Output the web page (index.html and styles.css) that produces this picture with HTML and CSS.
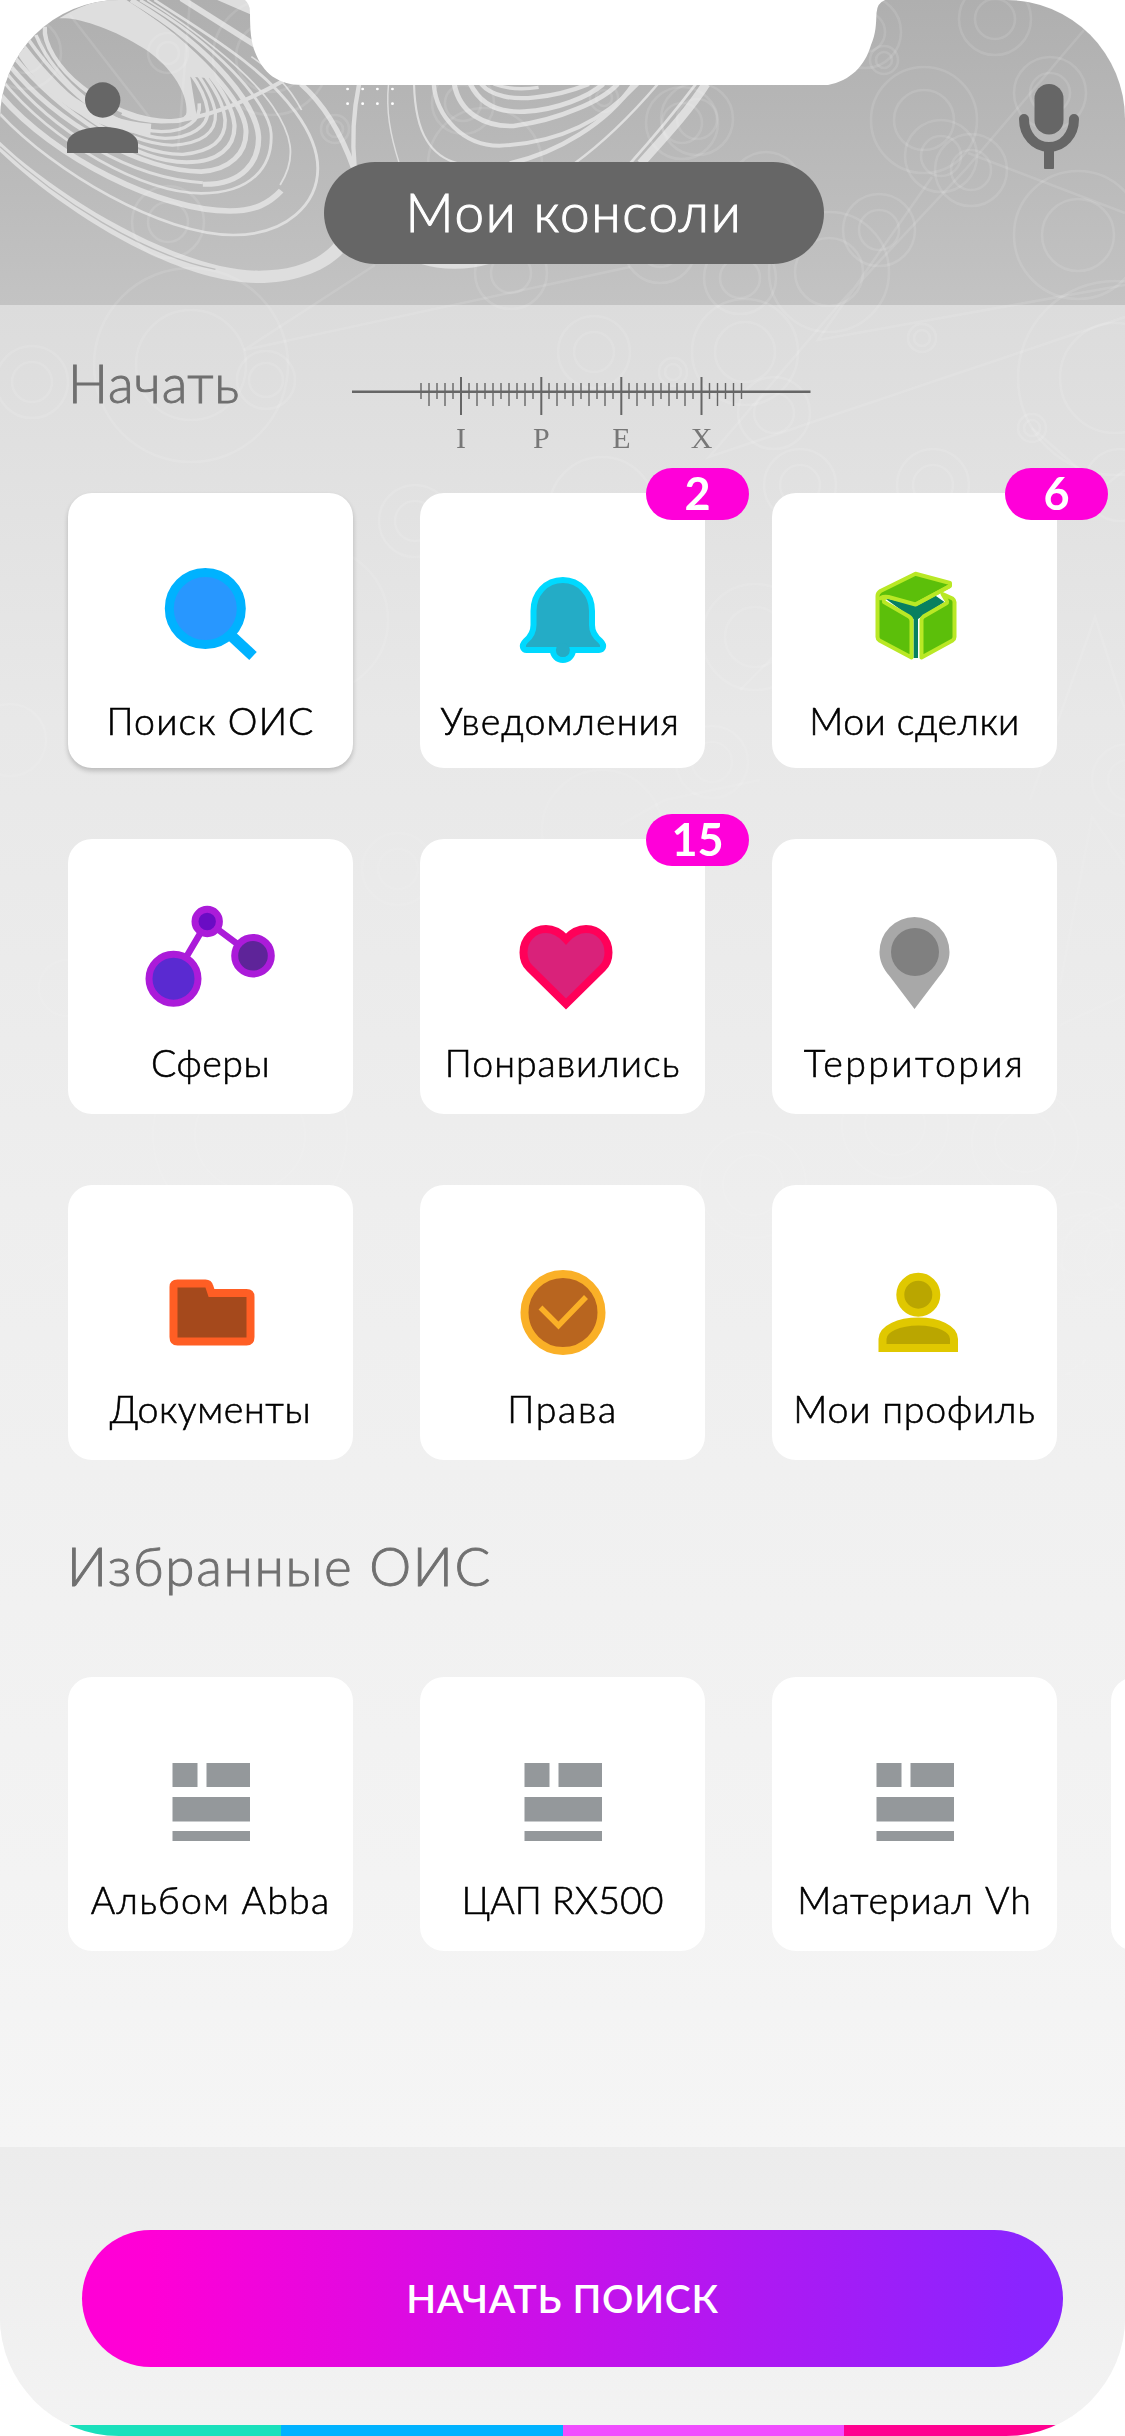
FILE: index.html
```html
<!DOCTYPE html>
<html lang="ru">
<head>
<meta charset="utf-8">
<title>Мои консоли</title>
<link rel="stylesheet" href="styles.css">
</head>
<body>
<div class="phone">
  <svg class="backdrop" viewBox="0 0 1125 2436" aria-hidden="true">
    <defs>
      <g id="ring-s"><circle r="14"/><circle r="8"/></g>
      <g id="ring-m"><circle r="36"/><circle r="20"/></g>
      <g id="ring-l"><circle r="53"/><circle r="30"/></g>
      <g id="ring-xl"><circle r="97"/><circle r="55"/></g>
      <linearGradient id="fade" x1="0" y1="0" x2="0" y2="1"><stop offset="0" stop-color="#fff"/><stop offset=".2" stop-color="#fff"/><stop offset=".45" stop-color="#888"/><stop offset="1" stop-color="#777"/></linearGradient>
      <mask id="fademask" maskUnits="userSpaceOnUse" x="0" y="0" width="1125" height="2436"><rect width="1125" height="2436" fill="url(#fade)"/></mask>
    </defs>
    <g class="waves" transform="scale(.35907 .33333)">
      <path class="solid" d="M0 425C160 590 500 812 720 812C820 812 890 780 930 730L955 760C900 820 810 849 720 849C480 849 160 620 0 455Z"/>
      <path class="gap" d="M0 440C160 600 400 765 600 808" stroke-width="4"/>
      <path d="M0 342C150 515 450 705 650 705C800 705 885 610 885 505C885 390 780 270 700 200C610 120 500 50 430 0" stroke-width="8"/>
      <path d="M0 285C150 475 450 633 640 633C710 633 750 610 783 572" stroke-width="17"/>
      <path d="M780 555C830 470 810 400 760 320C690 210 530 80 410 0" stroke-width="5"/>
      <path d="M5 240C150 430 400 580 560 580C700 580 760 500 755 400C750 310 600 130 390 0" stroke-width="8"/>
      <path d="M565 553C680 555 722 480 720 410C715 320 600 150 365 0" stroke-width="15"/>
      <path d="M15 215C150 395 360 535 565 548" stroke-width="9"/>
      <path d="M22 190C160 375 400 515 560 515C640 510 688 460 685 390C680 310 560 150 340 0" stroke-width="14"/>
      <path d="M35 165C170 345 380 487 520 487C610 487 655 440 653 375C645 290 540 130 330 0" stroke-width="12"/>
      <path d="M50 150C170 320 360 465 510 463C590 455 628 420 627 360C620 280 540 150 350 20" stroke-width="10"/>
      <path d="M65 135C190 310 340 430 480 436C560 430 603 400 600 340C590 270 530 170 400 60" stroke-width="9"/>
      <path d="M80 120C190 290 340 410 460 415C530 415 582 380 578 330C570 270 520 180 400 80" stroke-width="10"/>
      <path d="M100 105C150 240 310 390 450 395C520 395 560 360 555 310" stroke-width="10"/>
      <path d="M60 150C130 270 250 375 420 388" stroke-width="34"/>
      <path d="M125 80C115 185 290 362 480 364C525 364 535 340 525 300" stroke-width="12"/>
      <path class="solid" d="M165 55Q240 5 305 0L345 0C450 65 560 150 585 235L530 230L548 350L518 350C530 290 480 200 400 145C320 90 230 58 183 55Z"/>
      <path d="M340 340C450 395 600 355 788 243" stroke-width="12"/>
      <path d="M505 -5L710 135" stroke-width="17"/>
      <path class="solid" d="M605 0H690L700 44Z"/>
      <path d="M700 170C760 215 800 250 840 330" stroke-width="5"/>
      <path d="M838 252C900 310 950 400 985 505" stroke-width="15"/>
      <path d="M1000 252C985 330 980 420 988 505" stroke-width="12"/>
      <path d="M1082 252C1075 330 1085 400 1112 490" stroke-width="4"/>
      <path d="M1153 252C1155 330 1165 380 1188 420C1210 460 1240 480 1275 490" stroke-width="6"/>
      <path d="M1208 252C1215 350 1290 437 1390 437C1570 430 1690 350 1775 252" stroke-width="12"/>
      <path d="M1265 252C1280 340 1350 380 1430 378C1560 360 1680 300 1720 252" stroke-width="14"/>
      <path d="M1310 252C1340 320 1400 338 1460 335C1550 330 1640 290 1680 252" stroke-width="14"/>
      <path d="M1340 252C1370 290 1430 300 1490 292C1560 285 1610 265 1640 252" stroke-width="13"/>
      <path d="M1375 252Q1430 274 1500 262" stroke-width="10"/>
      <path d="M1420 490C1550 460 1690 370 1765 252" stroke-width="13"/>
      <path d="M1600 490C1690 420 1770 330 1832 252" stroke-width="7"/>
      <path d="M1755 490C1830 400 1890 320 1938 252" stroke-width="8"/>
      <path d="M1785 490C1860 400 1920 330 1966 252" stroke-width="25"/>
      <path class="solid" d="M1165 790Q1265 823 1370 790Z"/>
      <g class="dots"><circle cx="968" cy="267" r="4"/><circle cx="1010" cy="267" r="4"/><circle cx="1051" cy="267" r="4"/><circle cx="1093" cy="267" r="4"/><circle cx="968" cy="311" r="4"/><circle cx="1010" cy="311" r="4"/><circle cx="1051" cy="311" r="4"/><circle cx="1093" cy="311" r="4"/></g>
    </g>
    <g class="orbits" mask="url(#fademask)">
      <circle cx="168" cy="53" r="20"/><circle cx="168" cy="53" r="11"/><use href="#ring-m" x="168" y="222"/><use href="#ring-m" x="25" y="53"/>
      <use href="#ring-xl" x="191" y="365"/><use href="#ring-m" x="32" y="382"/><circle cx="266" cy="380" r="29"/><circle cx="266" cy="380" r="17"/>
      <use href="#ring-s" x="335" y="129"/><use href="#ring-m" x="511" y="273"/><circle cx="463" cy="103" r="31"/><circle cx="463" cy="103" r="18"/><circle cx="485" cy="165" r="57"/><circle cx="271" cy="57" r="58"/><circle cx="271" cy="57" r="35"/>
      <use href="#ring-m" x="995" y="19"/><use href="#ring-m" x="1050" y="93"/><use href="#ring-l" x="924" y="120"/><use href="#ring-m" x="941" y="156"/><use href="#ring-m" x="971" y="170"/>
      <circle cx="1078" cy="235" r="64"/><circle cx="1078" cy="235" r="36"/><use href="#ring-m" x="879" y="230"/><circle cx="829" cy="272" r="60"/><circle cx="829" cy="272" r="34"/><use href="#ring-m" x="740" y="278"/><use href="#ring-m" x="660" y="247"/><use href="#ring-m" x="766" y="188"/>
      <use href="#ring-l" x="745" y="352"/><use href="#ring-m" x="594" y="352"/><use href="#ring-s" x="673" y="372"/><use href="#ring-m" x="774" y="413"/><use href="#ring-s" x="922" y="338"/><use href="#ring-s" x="1032" y="428"/>
      <use href="#ring-m" x="682" y="123"/><use href="#ring-m" x="697" y="119"/><use href="#ring-m" x="865" y="32"/><use href="#ring-s" x="884" y="60"/><use href="#ring-s" x="604" y="98"/><use href="#ring-xl" x="1115" y="378"/>
      <use href="#ring-m" x="800" y="485"/><use href="#ring-m" x="933" y="485"/><circle cx="602" cy="510" r="53"/><circle cx="1120" cy="485" r="36"/>
      <use href="#ring-m" x="415" y="521"/><circle cx="315" cy="620" r="73"/><use href="#ring-l" x="755" y="637"/><use href="#ring-m" x="712" y="762"/><use href="#ring-m" x="1128" y="780"/>
      <use href="#ring-m" x="398" y="869"/><use href="#ring-xl" x="250" y="1135"/><circle cx="67" cy="988" r="28"/><circle cx="10" cy="740" r="36"/><circle cx="602" cy="830" r="60"/>
      <use href="#ring-l" x="465" y="1462"/><circle cx="710" cy="1488" r="30"/><circle cx="710" cy="1488" r="17"/><use href="#ring-l" x="753" y="1185"/><use href="#ring-l" x="895" y="1125"/><use href="#ring-l" x="1025" y="1142"/><use href="#ring-l" x="1082" y="1245"/><use href="#ring-l" x="1115" y="1260"/><use href="#ring-s" x="1070" y="1360"/><use href="#ring-m" x="438" y="1647"/>
      <path d="M375 265L244 350L630 267M70 15L150 118M190 0L178 150M1084 30L965 170L843 300L709 457L1125 317M932 177L818 340L1125 285M968 153L1125 213M1030 800L1095 617L1125 710M1060 985L1092 817L1125 865M1060 1025L1125 995M1060 520L1125 470M1032 428L1080 470M40 1270L70 1255M355 1385L366 1405L340 1400M740 690L790 640M1060 1380L1125 1330M1060 1240L1125 1200M620 825L665 800L760 780"/>
    </g>
  </svg>

  <header class="header">
    <svg class="header-icon" width="72" height="86" viewBox="67 83 72 86" role="img" aria-label="Профиль"><circle cx="102.700" cy="99" r="17.700"/><path d="M67 152V143C67 133 82 126 102.500 126C123 126 138 133 138 143V152Z"/></svg>
    <h1 class="title-pill">Мои консоли</h1>
    <svg class="header-icon" width="60" height="86" viewBox="1019 84 60 86" role="img" aria-label="Микрофон"><rect x="1034.500" y="84" width="29" height="50.500" rx="14.500"/><path class="mic-arc" d="M1024 119C1024 135 1035 147 1049 147C1063 147 1074 135 1074 119"/><rect x="1044" y="149" width="10" height="20" rx="1"/></svg>
  </header>
  <svg class="notch" width="640" height="86" viewBox="245 0 640 86" aria-hidden="true"><path d="M245 0Q250 4 250 13C250 30 251 42 255 52C263 73 278 85 302 85H828C850 81 865 66 871 45C876 33 876 25 876.500 13Q877 3 885 0Z"/></svg>

  <main class="content">
    <div class="section-head">
      <h2 class="section-title">Начать</h2>
      <div class="logo">
        <svg width="459" height="40" viewBox="352 376 459 40" aria-hidden="true">
          <path class="ruler-line" d="M352 391.700H810.500"/>
          <path class="ruler-tick" d="M421 383v16m8 -16v23m8 -23v16m8 -16v23m8 -23v16M469 383v16m8 -16v23m8 -23v16m8 -16v23m8 -23v16m8 -16v23m8 -23v16m8 -16v23m8 -23v16M549 383v16m8 -16v23m8 -23v16m8 -16v23m8 -23v16m8 -16v23m8 -23v16m8 -16v23m8 -23v16M629 383v16m8 -16v23m8 -23v16m8 -16v23m8 -23v16m8 -16v23m8 -23v16m8 -16v23m8 -23v16M709.500 383v16m8 -16v23m8 -23v16m8 -16v23m8 -23v16"/>
          <path class="ruler-major" d="M461 377v38M541.300 377v38M621.300 377v38M701.500 377v38"/>
        </svg>
        <div class="logo-letters"><span>I</span><span>P</span><span>E</span><span>X</span></div>
      </div>
    </div>

    <div class="grid">
      <a class="tile tile-active">
        <svg viewBox="130.500 563 160 110"><ellipse cx="204.800" cy="608.500" rx="36" ry="36" fill="#2897ff" stroke="#00b2ff" stroke-width="9"/><path d="M231 636L252.500 656" stroke="#00b2ff" stroke-width="11"/></svg>
        <span class="label l-search">Поиск ОИС</span>
      </a>
      <a class="tile">
        <svg viewBox="482.500 563 160 110" fill="#24acc6" stroke="#00d9ff" stroke-width="6"><circle cx="562.400" cy="650" r="10"/><path d="M562.400 580C545 580 533 594 533 611V625C533 632 530 637 525 641C520 646 523 650 526 650H598.500C602 650 605 646 600 641C595 637 591.500 632 591.500 625V611C591.500 594 579 580 562.400 580Z"/><circle cx="562.400" cy="650" r="7" stroke="none"/></svg>
        <span class="label l-notify">Уведомления</span>
        <b class="badge">2</b>
      </a>
      <a class="tile">
        <svg viewBox="834.500 563 160 110" fill="#5cbf0a" stroke="#b9e825" stroke-width="4" stroke-linejoin="round"><path fill="#088060" stroke="none" d="M884 598L915 605L934 595L944 602L917.500 619V658H913V619Z"/><path d="M877 596Q877 593 880 591L915 573.700L949.500 583V586L915 604.500L888 597Q882 597 883.500 602L908.500 616.500Q911 618 911 621V657.500L879 640.500Q877 639 877 637Z"/><path fill="none" d="M879 600Q880 596 888 597M915 604.500L949.500 586"/><path d="M942 594L952 598.500Q954 600 954 602V637Q954 639 952 640.500L921 657.500V620Q921 618 923 616.500L945.500 603.500Q948 602 945 599Z"/></svg>
        <span class="label l-deals">Мои сделки</span>
        <b class="badge badge-far">6</b>
      </a>
      <a class="tile tile-low">
        <svg viewBox="130.500 909 160 110" stroke="#ab1bd9" stroke-width="7"><path d="M173 978.700L206.700 921.500L252.500 955.700" fill="none" stroke-width="6.500"/><circle cx="173" cy="978.700" r="24.500" fill="#5a2ad1"/><circle cx="206.700" cy="921.500" r="12.200" fill="#6a0cc4"/><circle cx="252.500" cy="955.700" r="18.300" fill="#5e2499"/></svg>
        <span class="label l-spheres">Сферы</span>
      </a>
      <a class="tile tile-low">
        <svg viewBox="482.500 909 160 110"><path fill="#d9227a" stroke="#ff0059" stroke-width="8" d="M565.500 939C560 933 553 929 545.500 929C533 929 523 939 523 952.500C523 959 525 964 529 968L565.500 1004L602 968C606 964 608 959 608 952.500C608 939 598 929 585.500 929C578 929 571 933 565.500 939Z"/></svg>
        <span class="label l-liked">Понравились</span>
        <b class="badge">15</b>
      </a>
      <a class="tile tile-low">
        <svg viewBox="834.500 909 160 110"><path fill="#a8a8a8" d="M914 1009L889 976C882 968 879 960 879 952A35 35 0 0 1 949 952C949 960 946 968 939 976Z"/><circle cx="914.500" cy="952" r="24" fill="#808080"/></svg>
        <span class="label l-territory">Территория</span>
      </a>
      <a class="tile tile-low">
        <svg viewBox="130.500 1255 160 110"><path fill="#a5491c" stroke="#ff5e24" stroke-width="8" d="M173 1287Q173 1283.500 177 1283.500H205Q208 1283.500 209 1287L211 1293H246Q250 1293 250 1297V1337Q250 1341.500 246 1341.500H177Q173 1341.500 173 1337Z"/></svg>
        <span class="label l-docs">Документы</span>
      </a>
      <a class="tile tile-low">
        <svg viewBox="482.500 1255 160 110"><circle cx="562.500" cy="1312.500" r="38.500" fill="#b8651f" stroke="#fab027" stroke-width="8"/><path d="M540 1307.500L558 1325.500L585.500 1297" fill="none" stroke="#fab027" stroke-width="5.500"/></svg>
        <span class="label l-rights">Права</span>
      </a>
      <a class="tile tile-low">
        <svg viewBox="834.500 1255 160 110" fill="#baa600" stroke="#e0c800" stroke-width="8"><circle cx="917.800" cy="1294.700" r="18"/><path d="M882 1348V1339C882 1329 898 1321.500 918 1321.500C938 1321.500 953.500 1329 953.500 1339V1348Z"/></svg>
        <span class="label l-profile">Мои профиль</span>
      </a>
    </div>

    <h2 class="section-title favorites-title">Избранные ОИС</h2>
    <div class="carousel">
      <a class="tile tile-low">
        <svg class="blocks" viewBox="130.500 1747 160 110"><path d="M172 1763h25v24h-25zM206 1763h43.500v24h-43.500zM172 1797h77.500v24.500h-77.500zM172 1831h77.500v10h-77.500z"/></svg>
        <span class="label l-abba">Альбом Abba</span>
      </a>
      <a class="tile tile-low">
        <svg class="blocks" viewBox="130.500 1747 160 110"><path d="M172 1763h25v24h-25zM206 1763h43.500v24h-43.500zM172 1797h77.500v24.500h-77.500zM172 1831h77.500v10h-77.500z"/></svg>
        <span class="label l-dac">ЦАП RX500</span>
      </a>
      <a class="tile tile-low">
        <svg class="blocks" viewBox="130.500 1747 160 110"><path d="M172 1763h25v24h-25zM206 1763h43.500v24h-43.500zM172 1797h77.500v24.500h-77.500zM172 1831h77.500v10h-77.500z"/></svg>
        <span class="label l-vh">Материал Vh</span>
      </a>
      <a class="tile tile-peek"></a>
    </div>
  </main>

  <footer class="footer">
    <button class="cta">НАЧАТЬ ПОИСК</button>
    <div class="stripes"><i></i><i></i><i></i><i></i></div>
  </footer>
</div>
</body>
</html>
```
FILE: styles.css
```css
* { box-sizing: border-box; }
body { margin: 0; background: #fff; font-family: Lato, "Noto Sans", sans-serif; }
h1, h2 { margin: 0; font-weight: 300; }

.phone {
  position: relative;
  display: flex;
  flex-direction: column;
  width: 1125px;
  height: 2436px;
  overflow: hidden;
  border-radius: 119px;
  background: linear-gradient(#afafaf, #c3c3c3) 0 0 / 100% 305px no-repeat,
    linear-gradient(#dcdcdc 305px, #e8e8e8 720px, #eeeeee 1200px, #f5f5f5 2147px);
}
.backdrop { position: absolute; left: 0; top: 0; width: 1125px; height: 2436px; }
.waves { fill: none; stroke: #dedede; }
.waves .solid { fill: #dedede; stroke: none; }
.waves .gap { stroke: #bdbdbd; }
.waves .dots { fill: #fff; stroke: none; }
.orbits { fill: none; stroke: #fff; stroke-opacity: .11; stroke-width: 2.6; }

.header {
  position: relative;
  display: flex;
  justify-content: space-between;
  align-items: flex-start;
  height: 305px;
  padding: 84px 46px 0 67px;
}
.header-icon { fill: #666; overflow: visible; }
.mic-arc { fill: none; stroke: #666; stroke-width: 10; stroke-linecap: round; }
.title-pill {
  width: 500px;
  height: 102px;
  margin: 78px 10px 0 0;
  border-radius: 51px;
  background: #666;
  color: #fff;
  font-size: 53px;
  line-height: 100px;
  text-align: center;
  letter-spacing: 1.7px;
  -webkit-text-stroke: 1px #fff;
}
.notch { position: absolute; left: 245px; top: 0; fill: #fff; }

.content { position: relative; flex: 1; padding: 0 68px; }
.section-head { display: flex; align-items: flex-start; height: 188px; padding-top: 71px; }
.section-title { color: #707070; font-size: 53px; line-height: 64px; letter-spacing: 1.6px; -webkit-text-stroke: .9px #707070; }
.section-head .section-title { width: 284px; margin-top: -25px; letter-spacing: .8px; }
.logo svg { display: block; }
.ruler-line { stroke: #666; stroke-width: 2.600; }
.ruler-tick { fill: none; stroke: #666; stroke-width: 1.400; }
.ruler-major { stroke: #666; stroke-width: 2; }
.logo-letters {
  display: grid;
  grid-template-columns: repeat(4, 80.200px);
  margin: 5px 0 0 69px;
  color: #777;
  font: 30px/34px "Liberation Serif", serif;
  text-align: center;
}

.grid { display: grid; grid-template-columns: repeat(3, 285px); grid-auto-rows: 274.500px; gap: 71.500px 67px; }
.tile {
  position: relative;
  display: flex;
  flex-direction: column;
  align-items: center;
  height: 274.500px;
  padding-top: 70px;
  border-radius: 24px;
  background: #fff;
}
.tile svg { flex: none; width: 160px; height: 110px; overflow: visible; }
.tile-active { box-shadow: 0 3px 5px rgba(0, 0, 0, .2); }
.label {
  margin-top: 24px;
  color: #000;
  font-size: 37.500px;
  font-weight: 300;
  line-height: 48px;
  white-space: nowrap;
  -webkit-text-stroke: .6px #000;
}
.tile-low .label { margin-top: 19.500px; }
.l-search { letter-spacing: 1.100px; }
.l-notify { letter-spacing: 1.100px; margin-right: 5px; }
.l-deals { letter-spacing: .45px; }
.l-spheres { letter-spacing: .5px; }
.l-liked { letter-spacing: 1px; }
.l-territory { letter-spacing: 2.400px; }
.l-docs { letter-spacing: .6px; }
.l-rights { letter-spacing: 1.700px; }
.l-profile { letter-spacing: .8px; }
.l-abba { letter-spacing: 1.200px; }
.l-vh { letter-spacing: .9px; }
.badge {
  position: absolute;
  left: 226px;
  top: -25.500px;
  width: 103px;
  height: 52px;
  border-radius: 26px;
  background: #ff00d9;
  color: #fff;
  font-size: 45px;
  font-weight: 700;
  line-height: 50px;
  text-align: center;
}
.badge-far { left: 233px; }

.favorites-title { margin: 74px 0 79px -1px; }
.carousel { display: flex; gap: 67px; width: 1057px; overflow: hidden; }
.carousel .tile { flex: 0 0 285px; }
.carousel .tile-peek { margin-left: -13px; }
.blocks { fill: #94989b; }

.footer {
  position: relative;
  display: flex;
  flex-direction: column;
  align-items: center;
  justify-content: space-between;
  height: 289px;
  padding-top: 83px;
  background: linear-gradient(#ececec, #f3f3f3);
}
.cta {
  width: 981px;
  height: 137px;
  margin-left: 20px;
  padding: 0 20px 2px 0;
  border: 0;
  border-radius: 68.500px;
  background: linear-gradient(90deg, #ff00d6 7%, #8a24ff 96%);
  color: #fff;
  font: 600 39px Lato, "Noto Sans", sans-serif;
  letter-spacing: .7px;
}
.stripes { display: flex; width: 100%; height: 11px; }
.stripes i { flex: 1; background: #1ae0bc; }
.stripes i:nth-child(2) { background: #00b2ff; }
.stripes i:nth-child(3) { background: #f04dff; }
.stripes i:nth-child(4) { background: #ff0090; }
```
